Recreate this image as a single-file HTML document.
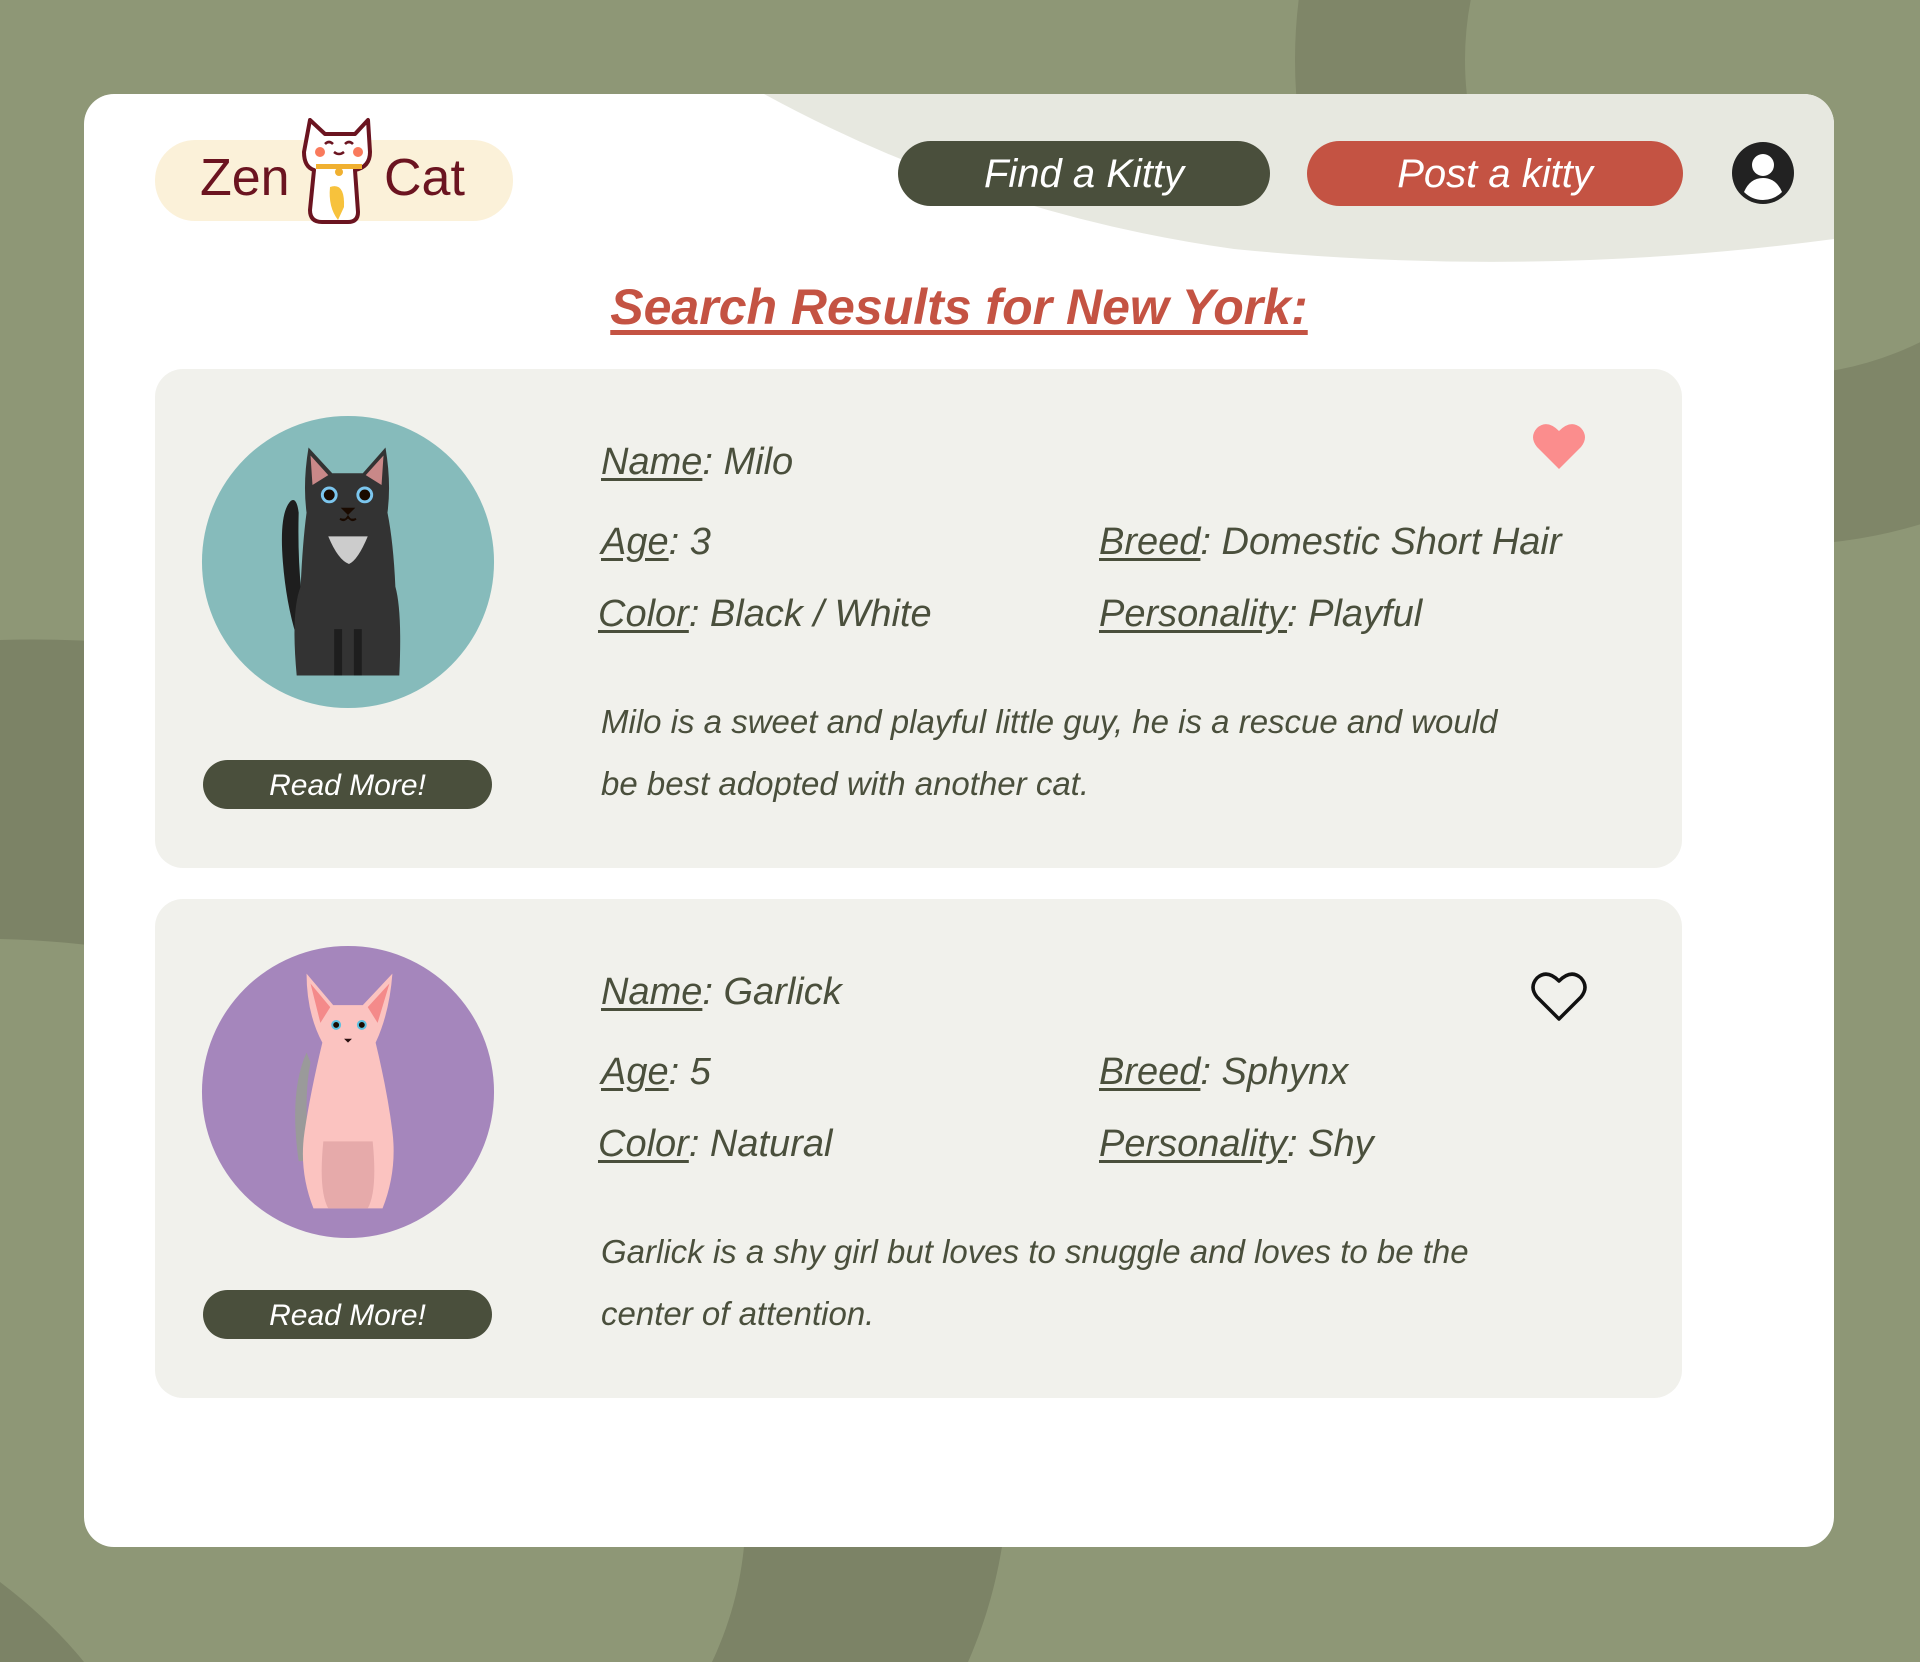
<!DOCTYPE html>
<html><head><style>
*{margin:0;padding:0;box-sizing:border-box}
body{width:1920px;height:1662px;background:#8e9776;position:relative;overflow:hidden;font-family:"Liberation Sans",sans-serif}
.card{position:absolute;left:84px;top:94px;width:1750px;height:1453px;background:#fff;border-radius:30px;overflow:hidden}
.res{position:absolute;left:71px;width:1527px;height:499px;background:#f1f1ec;border-radius:28px}
.btn{position:absolute;top:47px;height:65px;border-radius:33px;color:#fff;font-style:italic;font-size:40px;text-align:center;line-height:66px}
.rm{position:absolute;left:48px;top:391px;width:289px;height:49px;border-radius:25px;background:#4a4f3c;color:#fff;font-style:italic;font-size:30px;text-align:center;line-height:51px}
.f{position:absolute;font-size:38px;font-style:italic;color:#4a4f3c;white-space:nowrap}
.f u{text-underline-offset:4px}
.d{position:absolute;left:446px;top:322px;width:1100px;font-size:33px;line-height:62px;font-style:italic;color:#4a4f3c}
.circ{position:absolute;left:45px;top:45px;width:296px;height:296px}
</style></head><body>
<svg style="position:absolute;left:0;top:0" width="1920" height="1662">
<circle cx="1780" cy="60" r="400" fill="none" stroke="#7f8668" stroke-width="170"/>
<path d="M0 640 C700 620 1150 1250 968 1662 L712 1662 C860 1350 500 950 0 939Z" fill="#7c8366"/>
<path d="M0 1582 Q50 1620 84 1662 L0 1662Z" fill="#7c8366"/>
</svg>
<div class="card">
<svg style="position:absolute;left:0;top:0" width="1750" height="200"><path d="M680 0 Q900 120 1150 155 Q1450 185 1750 145 L1750 0Z" fill="#e7e8e0"/></svg>
<div style="position:absolute;left:71px;top:46px;width:358px;height:81px;background:#fbf1d9;border-radius:40px"></div>
<div style="position:absolute;left:116px;top:54px;font-size:52px;color:#6b1420">Zen</div>
<div style="position:absolute;left:300px;top:54px;font-size:52px;color:#6b1420">Cat</div>
<svg style="position:absolute;left:216px;top:18px" width="80" height="112" viewBox="0 0 80 112">
<path d="M10 8 L25 22 L55 22 L68 8 L70 40 Q70 55 55 58 L58 100 Q58 110 48 110 L22 110 Q10 110 10 98 L14 58 Q4 55 4 40Z" fill="#fff" stroke="#6b1420" stroke-width="4" stroke-linejoin="round"/>
<path d="M30 75 Q45 70 44 95 L38 108 Q28 95 30 75Z" fill="#f7c23c"/>
<rect x="16" y="52" width="46" height="5" fill="#f0b030"/>
<circle cx="39" cy="60" r="4" fill="#f0b030"/>
<circle cx="20" cy="40" r="5" fill="#f97a5c"/><circle cx="58" cy="40" r="5" fill="#f97a5c"/>
<path d="M25 32 q4-4 8 0 M45 32 q4-4 8 0 M34 40 q5 4 10 0" stroke="#6b1420" stroke-width="2.5" fill="none"/>
</svg>
<div class="btn" style="left:814px;width:372px;background:#4a4f3c">Find a Kitty</div>
<div class="btn" style="left:1223px;width:376px;background:#c45343">Post a kitty</div>
<svg style="position:absolute;left:1646px;top:46px" width="66" height="66" viewBox="0 0 66 66"><circle cx="33" cy="33" r="31" fill="#222"/><circle cx="33" cy="25" r="11" fill="#fff"/><path d="M14 52 Q20 38 33 38 Q46 38 52 52 Q44 60 33 60 Q22 60 14 52Z" fill="#fff"/></svg>
<div style="position:absolute;left:0;width:1750px;top:184px;text-align:center;font-size:50px;font-style:italic;font-weight:bold;color:#c45343"><u style="text-underline-offset:6px">Search Results for New York:</u></div>

<div class="res" style="top:275px">
<svg class="circ" viewBox="0 0 300 300"><circle cx="150" cy="150" r="148" fill="#86bbbb"/>
<path d="M92 88 Q80 100 84 150 Q88 200 102 238 L112 230 Q98 180 100 100 Q98 84 92 88Z" fill="#1e1e1e"/>
<path d="M110 34 L134 60 L165 60 L188 34 Q194 70 190 100 Q196 130 198 175 Q205 200 202 265 L98 265 Q92 200 102 175 Q104 130 108 100 Q104 70 110 34Z" fill="#333"/>
<path d="M112 42 L130 62 L114 72Z M186 42 L168 62 L184 72Z" fill="#c98888"/>
<path d="M130 124 L170 124 Q160 148 151 152 Q140 148 130 124Z" fill="#ccc"/>
<circle cx="131" cy="82" r="7" fill="#1a0a00" stroke="#7cc6ee" stroke-width="3"/><circle cx="167" cy="82" r="7" fill="#1a0a00" stroke="#7cc6ee" stroke-width="3"/>
<path d="M145 96 h10 l-5 5z M142 106 q4 4 8-2 q4 6 8 2" stroke="#1a0a00" stroke-width="2" fill="#1a0a00"/>
<path d="M140 218 L140 265 M160 218 L160 265" stroke="#1e1e1e" stroke-width="8"/>
</svg>
<div class="rm">Read More!</div>
<div class="f" style="left:446px;top:72px"><u>Name</u>: Milo</div>
<div class="f" style="left:446px;top:152px"><u>Age</u>: 3</div>
<div class="f" style="left:944px;top:152px"><u>Breed</u>: Domestic Short Hair</div>
<div class="f" style="left:443px;top:224px"><u>Color</u>: Black / White</div>
<div class="f" style="left:944px;top:224px"><u>Personality</u>: Playful</div>
<div class="d">Milo is a sweet and playful little guy, he is a rescue and would<br>be best adopted with another cat.</div>
<svg style="position:absolute;left:1376px;top:52px" width="56" height="50" viewBox="0 0 56 50"><path d="M28 48 L6 26 Q-2 16 6 7 Q16 -2 28 10 Q40 -2 50 7 Q58 16 50 26Z" fill="#fb8d8d"/></svg>
</div>

<div class="res" style="top:805px">
<svg class="circ" viewBox="0 0 300 300"><circle cx="150" cy="150" r="148" fill="#a586bc"/>
<path d="M108 110 Q90 150 100 220 L112 220 Q104 160 112 120Z" fill="#9a9a9a"/>
<path d="M108 30 L135 62 L165 62 L195 30 Q192 70 178 100 Q190 150 195 190 Q200 230 185 268 L115 268 Q100 230 106 190 Q112 150 124 100 Q108 70 108 30Z" fill="#fbc3c0"/>
<path d="M112 40 L132 64 L122 80Z M192 40 L170 64 L180 80Z" fill="#f48a8a"/>
<path d="M125 200 Q120 250 130 268 L170 268 Q180 250 175 200Z" fill="#e6aaaa"/>
<circle cx="138" cy="82" r="4" fill="#1a0a00" stroke="#5bc0e0" stroke-width="2"/><circle cx="164" cy="82" r="4" fill="#1a0a00" stroke="#5bc0e0" stroke-width="2"/>
<path d="M146 96 h8 l-4 4z" fill="#2a1010"/>
</svg>
<div class="rm">Read More!</div>
<div class="f" style="left:446px;top:72px"><u>Name</u>: Garlick</div>
<div class="f" style="left:446px;top:152px"><u>Age</u>: 5</div>
<div class="f" style="left:944px;top:152px"><u>Breed</u>: Sphynx</div>
<div class="f" style="left:443px;top:224px"><u>Color</u>: Natural</div>
<div class="f" style="left:944px;top:224px"><u>Personality</u>: Shy</div>
<div class="d">Garlick is a shy girl but loves to snuggle and loves to be the<br>center of attention.</div>
<svg style="position:absolute;left:1376px;top:72px" width="56" height="52" viewBox="0 0 56 52"><path d="M28 48 L6 26 Q-2 16 6 7 Q16 -2 28 10 Q40 -2 50 7 Q58 16 50 26Z" fill="none" stroke="#111" stroke-width="3.5" stroke-linejoin="round"/></svg>
</div>
</div>
</body></html>
